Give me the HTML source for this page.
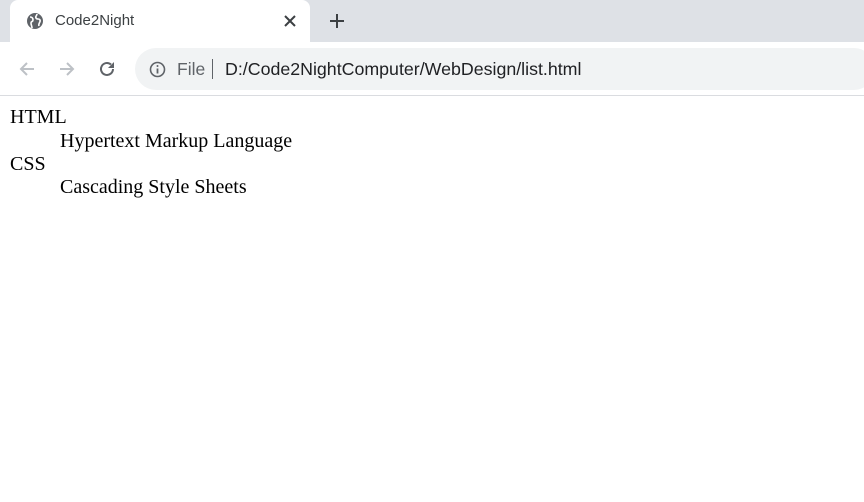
<!DOCTYPE html>
<html><head><style>
body{margin:0;width:864px;height:502px;background:#fff;position:relative;overflow:hidden;font-family:"Liberation Sans",sans-serif}
.tabbar{position:absolute;left:0;top:0;width:864px;height:42px;background:#dee1e6}
.tab{position:absolute;left:10px;top:0;width:300px;height:42px;background:#fff;border-radius:8px 8px 0 0}
.toolbar{position:absolute;left:0;top:42px;width:864px;height:53px;background:#fff;border-bottom:1px solid #dadce0}
.omni{position:absolute;left:135px;top:6px;width:740px;height:42px;background:#f1f3f4;border-radius:21px}
.t{position:absolute;white-space:nowrap}
.c{font-family:"Liberation Serif",serif;font-size:20px;color:#000;position:absolute;white-space:nowrap}
</style></head><body>
<div class="tabbar"></div>
<div class="tab"></div>
<svg class="t" style="left:26px;top:12px" width="18" height="18" viewBox="0 0 18 18"><circle cx="9" cy="9" r="8" fill="#5f6368"/><path d="M4 5c2 0 3 1 3 3s-2 1-2 3 1 3 1 5M11 2c0 2-2 2-1 4s3 0 4 2-2 3-1 6" stroke="#fff" stroke-width="1.6" fill="none"/></svg>
<div class="t" style="left:55px;top:12px;font-size:15px;color:#3c4043">Code2Night</div>
<svg class="t" style="left:284px;top:15px" width="12" height="12"><path d="M1 1l10 10M11 1L1 11" stroke="#3c4043" stroke-width="2"/></svg>
<svg class="t" style="left:329px;top:13px" width="16" height="16"><path d="M8 1v14M1 8h14" stroke="#3c4043" stroke-width="2"/></svg>
<div class="toolbar"><div class="omni"></div></div>
<svg class="t" style="left:17px;top:59px" width="20" height="20"><path d="M17 10H4M10 4l-6 6 6 6" stroke="#bdc1c6" stroke-width="2" fill="none"/></svg>
<svg class="t" style="left:57px;top:59px" width="20" height="20"><path d="M3 10h13M10 4l6 6-6 6" stroke="#bdc1c6" stroke-width="2" fill="none"/></svg>
<svg class="t" style="left:97px;top:59px" width="20" height="20"><path d="M16 10a6 6 0 1 1-2-4.5" stroke="#5f6368" stroke-width="2" fill="none"/><path d="M17 3v6h-6z" fill="#5f6368"/></svg>
<svg class="t" style="left:149px;top:61px" width="17" height="17"><circle cx="8.5" cy="8.5" r="7" stroke="#5f6368" stroke-width="1.6" fill="none"/><path d="M8.5 7.5v5" stroke="#5f6368" stroke-width="1.8"/><circle cx="8.5" cy="5" r="1" fill="#5f6368"/></svg>
<div class="t" style="left:177px;top:59px;font-size:17.5px;color:#5f6368">File</div>
<div class="t" style="left:212px;top:59px;width:1px;height:20px;background:#5f6368"></div>
<div class="t" style="left:225px;top:59px;font-size:17.8px;color:#202124">D:/Code2NightComputer/WebDesign/list.html</div>
<div class="c" style="left:10px;top:106px">HTML</div>
<div class="c" style="left:60px;top:130px">Hypertext Markup Language</div>
<div class="c" style="left:10px;top:153px">CSS</div>
<div class="c" style="left:60px;top:176px">Cascading Style Sheets</div>
</body></html>
